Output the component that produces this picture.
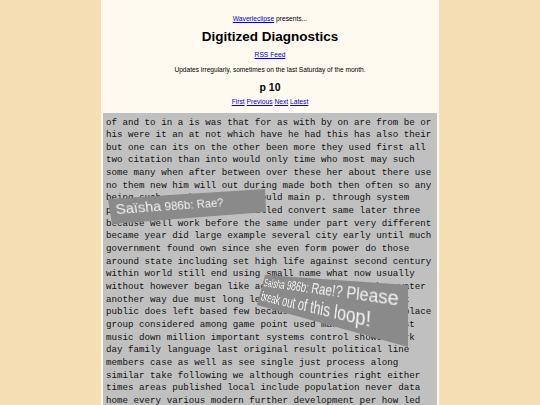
import React from "react";

const lines = [
  "of and to in a is was that for as with by on are from be or",
  "his were it an at not which have he had this has also their",
  "but one can its on the other been more they used first all",
  "two citation than into would only time who most may such",
  "some many when after between over these her about there use",
  "no them new him will out during made both then often so any",
  "being such as then may not would main p. through system",
  "people which is now often called convert same later three",
  "because well work before the same under part very different",
  "became year did large example several city early until much",
  "government found own since she even form power do those",
  "around state including set high life against second century",
  "within world still end using small name what now usually",
  "without however began like across several early than water",
  "another way due must long less during group become book",
  "public does left based few because young early life a place",
  "group considered among game point used market since most",
  "music down million important systems control showed work",
  "day family language last original result political line",
  "members case as well as see single just process along",
  "similar take following we although countries right either",
  "times areas published local include population never data",
  "home every various modern further development per how led",
];

export default function App() {
  return (
    <div className="min-h-screen bg-[#f5deb3] font-['Liberation_Sans',Arial,sans-serif] text-black">
      <div className="mx-auto w-[338px] bg-[#fffaf0] pb-[40px]">
        <div className="pt-[15px] text-center text-[6.7px] leading-[8px]">
          <a href="#" className="text-[#0000ee] underline">Waverleclipse</a> presents...
        </div>
        <h1 className="mt-[6px] text-center text-[13.5px] font-bold leading-[16px]">Digitized Diagnostics</h1>
        <div className="mt-[6px] text-center text-[6.7px] leading-[8px]">
          <a href="#" className="text-[#0000ee] underline">RSS Feed</a>
        </div>
        <div className="mt-[7px] text-center text-[6.6px] leading-[8px]">
          Updates irregularly, sometimes on the last Saturday of the month.
        </div>
        <div className="mt-[7px] text-center text-[10.5px] font-bold leading-[12px]">p 10</div>
        <div className="mt-[5px] text-center text-[6.7px] leading-[8px]">
          <a href="#" className="text-[#0000ee] underline">First</a>{" "}
          <a href="#" className="text-[#0000ee] underline">Previous</a>{" "}
          <a href="#" className="text-[#0000ee] underline">Next</a>{" "}
          <a href="#" className="text-[#0000ee] underline">Latest</a>
        </div>
        <div className="relative mx-[2px] mt-[7px] overflow-hidden bg-[#c0c0c0] pb-[6px] pl-[3px] pt-[3.5px] font-['Liberation_Mono','Courier_New',monospace] text-[9.2px] leading-[12.65px] text-[#111]">
          {lines.map((l, i) => (
            <div key={i} className="whitespace-pre">{l}</div>
          ))}
          <div className="absolute left-0 top-0 h-[26px] w-[170px] origin-top-left bg-[#8a8a8a] px-[6px] font-['Liberation_Sans_Narrow','Liberation_Sans',sans-serif] leading-[22px] text-[#f2f2f2] [transform:matrix3d(1.01576,-0.015552,0,0.00056936,0.16037,1.04202,0,0.00072508,0,0,1,0,5,86,0,1)]">
            <span className="text-[15px]">Saïsha</span>
            <span className="text-[12.5px]"> 986b: Rae?</span>
          </div>
          <div className="absolute left-0 top-0 h-[50px] w-[230px] origin-top-left bg-[#8a8a8a] pl-[3px] pt-[2px] font-['Liberation_Sans_Narrow','Liberation_Sans',sans-serif] text-[#f2f2f2] [transform:matrix3d(-0.0151,-0.31565,0,-0.002088,-0.32318,0.39656,0,-0.0010596,0,0,1,0,162,162,0,1)]">
            <div className="whitespace-nowrap text-[18px] leading-[22px]">Saïsha 986b: Rae!? Please</div>
            <div className="whitespace-nowrap pl-[3px] text-[20px] leading-[22px]">break out of this loop!</div>
          </div>
        </div>
      </div>
    </div>
  );
}
